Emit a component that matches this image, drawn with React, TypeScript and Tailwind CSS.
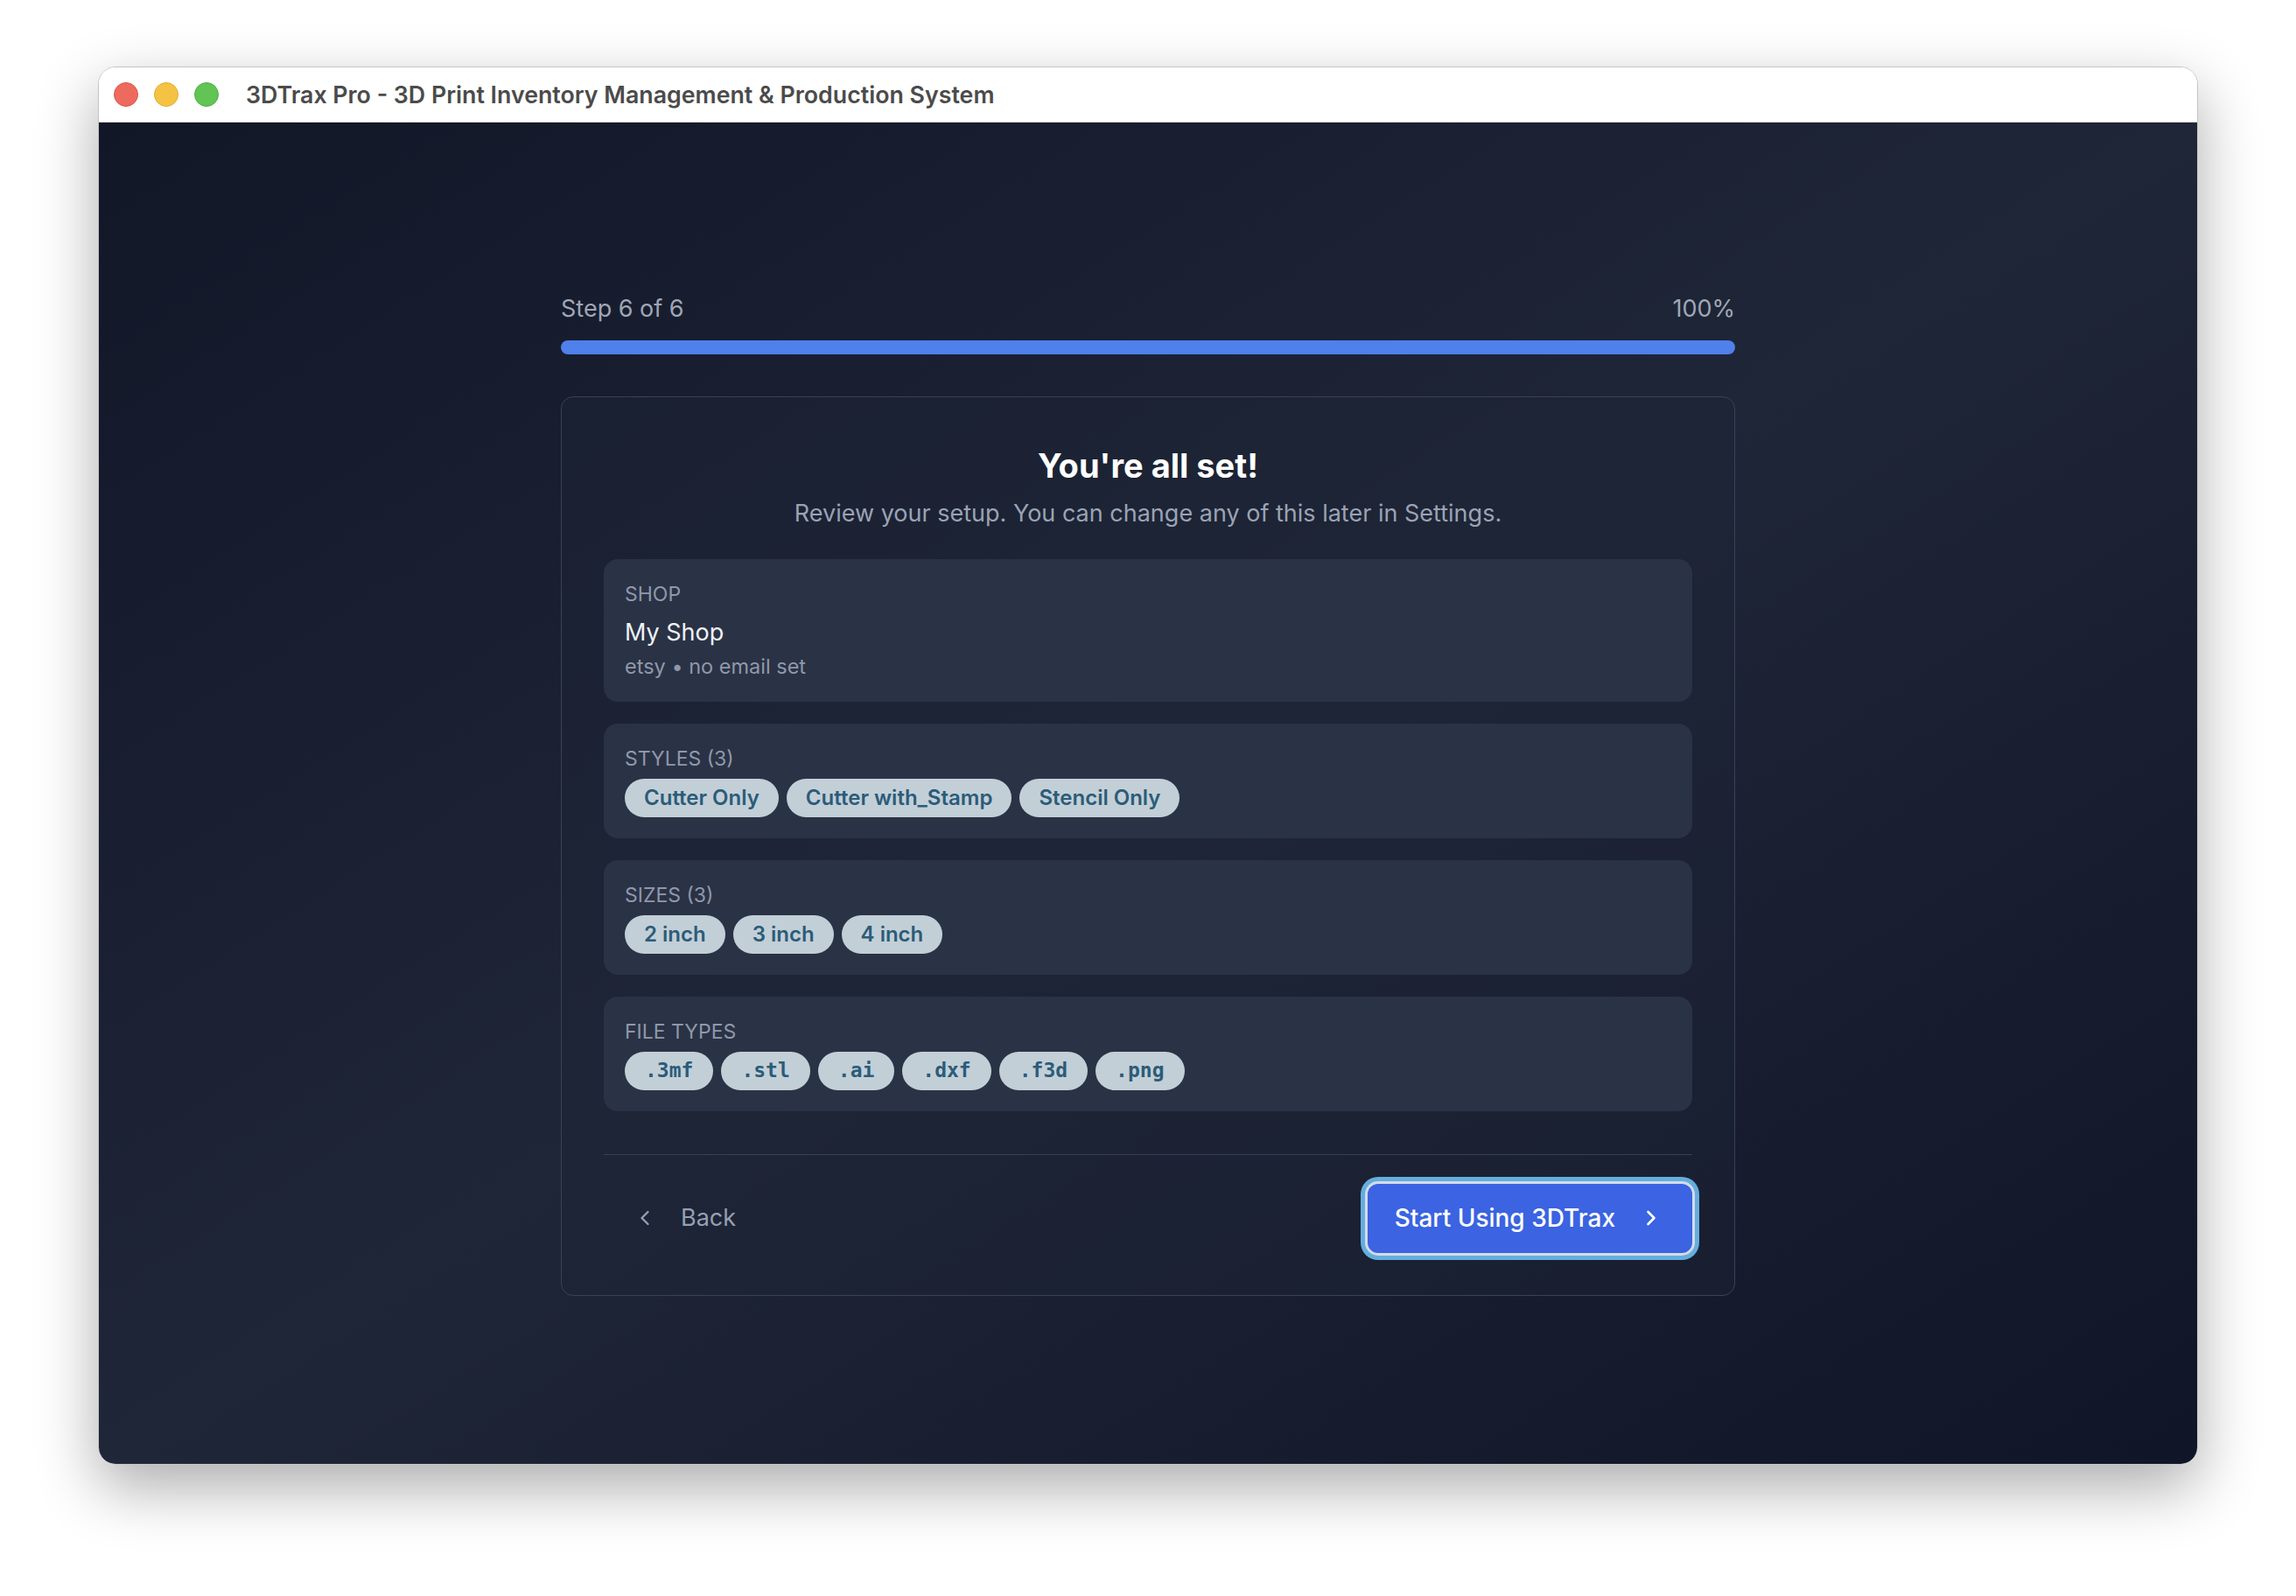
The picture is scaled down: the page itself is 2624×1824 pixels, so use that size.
import { ChevronLeft, ChevronRight } from "lucide-react";

const styles = ["Cutter Only", "Cutter with_Stamp", "Stencil Only"];
const sizes = ["2 inch", "3 inch", "4 inch"];
const fileTypes = [".3mf", ".stl", ".ai", ".dxf", ".f3d", ".png"];

function Chip({ label, mono = false }: { label: string; mono?: boolean }) {
  return (
    <span
      className={
        mono
          ? "h-[44px] px-[23px] flex items-center rounded-full bg-[#c3cfd7] text-[#2b5c79] text-[23px] font-bold font-['DejaVu_Sans_Mono',monospace]"
          : "h-[44px] px-[22px] flex items-center rounded-full bg-[#c3cfd7] text-[#2b5c79] text-[24px] font-semibold"
      }
    >
      {label}
    </span>
  );
}

function ChipSection({ title, items, mono }: { title: string; items: string[]; mono?: boolean }) {
  return (
    <div className="rounded-2xl bg-[#2a3245] px-6 py-6">
      <div className="text-[23px] leading-8 uppercase text-[#8f98aa]">{title}</div>
      <div className="mt-[7px] flex flex-wrap gap-[9px]">
        {items.map((item) => (
          <Chip key={item} label={item} mono={mono} />
        ))}
      </div>
    </div>
  );
}

export default function App() {
  return (
    <div className="h-[1824px] bg-white flex justify-center pt-[76px] px-[112px] pb-[150px] font-['Inter','Noto_Sans',sans-serif]">
      <div className="w-full h-full rounded-[20px] overflow-hidden flex flex-col border border-[#c4c4c4] shadow-[0_26px_70px_rgba(0,0,0,0.33)]">
        {/* Title bar */}
        <div className="h-[63px] shrink-0 bg-white border-b border-[#dcdcdc] flex items-center pl-[17px]">
          <div className="flex gap-[18px]">
            <span className="w-[28px] h-[28px] rounded-full bg-[#ee6a5f] border border-[#d9564c]" />
            <span className="w-[28px] h-[28px] rounded-full bg-[#f5c343] border border-[#dfac2e]" />
            <span className="w-[28px] h-[28px] rounded-full bg-[#61c454] border border-[#4faf43]" />
          </div>
          <div className="ml-[31px] text-[26.75px] font-semibold text-[#4b4b4b]">
            3DTrax Pro - 3D Print Inventory Management &amp; Production System
          </div>
        </div>

        {/* Onboarding */}
        <div className="flex-1 bg-linear-to-br from-[#121728] via-[#1f2637] to-[#101527] flex items-center justify-center">
          <div className="w-[1342px]">
            <div className="flex justify-between text-[27px] leading-[40px] text-[#9fa7b6]">
              <span>Step 6 of 6</span>
              <span>100%</span>
            </div>
            <div className="mt-4 h-4 rounded-full bg-[#4f80ec]" />

            <div className="mt-12 rounded-[14px] border border-[#394255] bg-[#1f2637]/40 px-12 pt-[55px] pb-12">
              <h1 className="text-center text-[38px] leading-[46px] font-bold text-white">You're all set!</h1>
              <p className="mt-3 text-center text-[27px] leading-[39px] text-[#9aa3b4]">
                Review your setup. You can change any of this later in Settings.
              </p>

              <div className="mt-[33px] flex flex-col gap-[25px]">
                <div className="rounded-2xl bg-[#2a3245] px-6 py-6">
                  <div className="text-[23px] leading-8 uppercase text-[#8f98aa]">Shop</div>
                  <div className="mt-2 text-[27px] leading-[39px] text-[#eef2f7]">My Shop</div>
                  <div className="mt-1 text-[23.5px] leading-8 text-[#8f98aa]">etsy • no email set</div>
                </div>
                <ChipSection title="Styles (3)" items={styles} />
                <ChipSection title="Sizes (3)" items={sizes} />
                <ChipSection title="File Types" items={fileTypes} mono />
              </div>

              <div className="mt-[49px] border-t border-[#374053] pt-[33px] flex items-center justify-between">
                <button className="h-[79px] flex items-center gap-[27px] pl-[33px] pr-6 text-[27px] text-[#94a0b4]">
                  <ChevronLeft size={28} strokeWidth={2} />
                  Back
                </button>
                <button className="h-[79px] flex items-center gap-[27px] pl-[31px] pr-[33px] rounded-xl bg-[#3b63e2] text-[28px] font-medium text-white shadow-[0_0_0_3px_#d4dbe8,0_0_0_8px_#64aedd]">
                  Start Using 3DTrax
                  <ChevronRight size={28} strokeWidth={2.25} />
                </button>
              </div>
            </div>
          </div>
        </div>
      </div>
    </div>
  );
}
